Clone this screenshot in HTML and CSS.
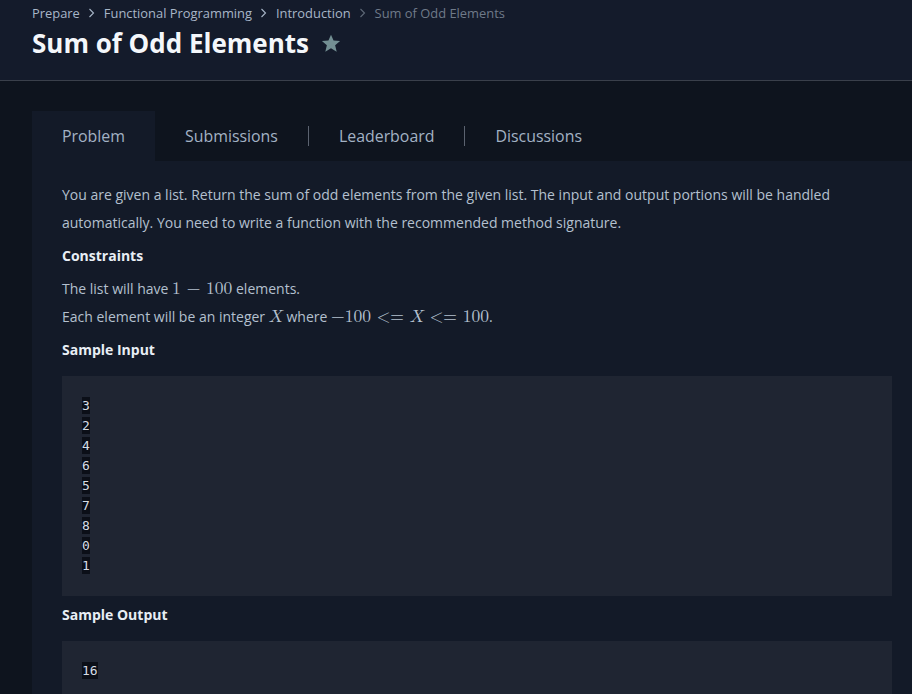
FILE: index.html
```html
<!DOCTYPE html>
<html>
<head>
<meta charset="utf-8">
<link rel="stylesheet" href="styles.css">
</head>
<body>
<header class="top">
  <nav class="crumbs">
    <a class="crumb">Prepare</a>
    <svg class="chev" width="7" height="10" viewBox="0 0 7 10"><path d="M1.5 1 L5.5 5 L1.5 9" fill="none" stroke="currentColor" stroke-width="1.1"/></svg>
    <a class="crumb">Functional Programming</a>
    <svg class="chev" width="7" height="10" viewBox="0 0 7 10"><path d="M1.5 1 L5.5 5 L1.5 9" fill="none" stroke="currentColor" stroke-width="1.1"/></svg>
    <a class="crumb">Introduction</a>
    <svg class="chev dim" width="7" height="10" viewBox="0 0 7 10"><path d="M1.5 1 L5.5 5 L1.5 9" fill="none" stroke="currentColor" stroke-width="1.1"/></svg>
    <span class="crumb current">Sum of Odd Elements</span>
  </nav>
  <div class="title-row">
    <h1 class="title">Sum of Odd Elements</h1>
    <svg class="star" width="20" height="19" viewBox="0 0 24 23"><path d="M12 0.8 L15.1 8 L23 8.6 L17 13.7 L18.9 21.5 L12 17.3 L5.1 21.5 L7 13.7 L1 8.6 L8.9 8 Z" fill="#738f93"/></svg>
  </div>
</header>
<main class="page">
  <div class="tabs">
    <div class="tab active">Problem</div>
    <div class="tab">Submissions</div>
    <div class="sep"></div>
    <div class="tab">Leaderboard</div>
    <div class="sep"></div>
    <div class="tab">Discussions</div>
  </div>
  <section class="panel">
    <p class="text">You are given a list. Return the sum of odd elements from the given list. The input and output portions will be handled automatically. You need to write a function with the recommended method signature.</p>
    <h3 class="heading">Constraints</h3>
    <p class="text">The list will have <span class="math">1 − 100</span> elements.<br>Each element will be an integer <span class="math"><i>X</i></span> where <span class="math">−100 &lt;= <i>X</i> &lt;= 100</span>.</p>
    <h3 class="heading">Sample Input</h3>
    <pre class="code"><span class="ln">3</span>
<span class="ln">2</span>
<span class="ln">4</span>
<span class="ln">6</span>
<span class="ln">5</span>
<span class="ln">7</span>
<span class="ln">8</span>
<span class="ln">0</span>
<span class="ln">1</span></pre>
    <h3 class="heading">Sample Output</h3>
    <pre class="code"><span class="ln">16</span></pre>
  </section>
</main>
</body>
</html>
```
FILE: styles.css
```css
html, body {
  margin: 0;
  padding: 0;
  background: #0e141e;
  overflow: hidden;
  height: 694px;
}
body {
  font-family: "Open Sans", "Noto Sans", sans-serif;
  color: #b4c0cf;
}
.top {
  background: #141b2b;
  border-bottom: 1px solid #3a404b;
  height: 81px;
  box-sizing: border-box;
  padding: 4px 0 0 32px;
}
.crumbs {
  display: flex;
  align-items: center;
  gap: 8.5px;
  font-size: 12.9px;
  line-height: 18px;
  height: 18px;
}
.crumb { color: #a8b6c8; }
.crumb.current { color: #6f7a89; }
.chev { color: #a8b6c8; }
.chev.dim { color: #5f6977; }
.title-row {
  display: flex;
  align-items: center;
  gap: 12px;
  margin-top: 3px;
}
.title {
  margin: 0;
  font-size: 26px;
  font-weight: 700;
  line-height: 36px;
  color: #f4f7fb;
}
.page {
  padding: 30px 0 0 32px;
}
.tabs {
  display: flex;
  align-items: center;
  height: 50px;
}
.tab {
  padding: 0 30px;
  height: 50px;
  line-height: 50px;
  font-size: 15.9px;
  color: #a3b2c4;
}
.tab.active {
  background: #131a28;
}
.sep {
  width: 1px;
  height: 20px;
  background: #5b6370;
}
.panel {
  background: #131a28;
  padding: 20px 20px 20px 30px;
  min-height: 600px;
}
.text {
  margin: 0;
  font-size: 14px;
  line-height: 28px;
}
.heading {
  margin: 9px 0 9px;
  font-size: 14px;
  line-height: 20px;
  font-weight: 700;
  color: #e8eef5;
}
.code + .heading { margin-top: 9px; }
.heading + .code { margin-top: 16px; }
.code {
  margin: 0;
  background: #1f2532;
  padding: 20px;
  font-family: "DejaVu Sans Mono", "Liberation Mono", monospace;
  font-size: 13px;
  line-height: 20px;
  color: #d6dde6;
}
.ln {
  background: #0b0f18;
  padding: 1px 0;
}
.math {
  font-family: "Latin Modern Math", "Liberation Serif", "DejaVu Serif", serif;
  font-size: 17.5px;
  color: #b4c0cf;
}
.math i { font-style: italic; margin-right: 1px; }
```
